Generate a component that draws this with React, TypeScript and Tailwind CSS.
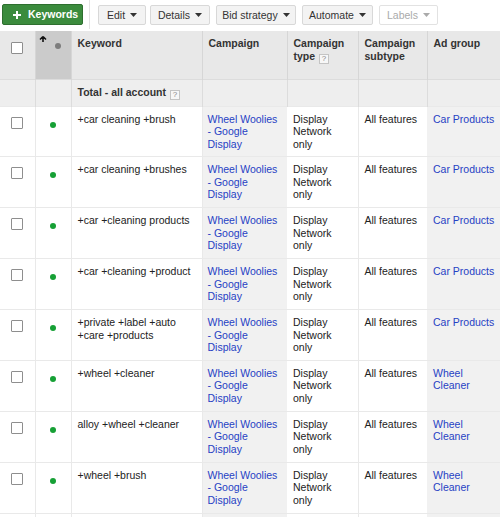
import React from "react";

const ROWS = [
  { kw: "+car cleaning +brush", ag: "Car Products" },
  { kw: "+car cleaning +brushes", ag: "Car Products" },
  { kw: "+car +cleaning products", ag: "Car Products" },
  { kw: "+car +cleaning +product", ag: "Car Products" },
  { kw: "+private +label +auto +care +products", ag: "Car Products" },
  { kw: "+wheel +cleaner", ag: "Wheel Cleaner" },
  { kw: "alloy +wheel +cleaner", ag: "Wheel Cleaner" },
  { kw: "+wheel +brush", ag: "Wheel Cleaner" },
];

function Caret() {
  return (
    <svg width="7" height="4" viewBox="0 0 7 4" className="ml-[5px]">
      <polygon points="0,0 7,0 3.5,4" fill="currentColor" />
    </svg>
  );
}

function Help() {
  return (
    <span className="ml-[4px] inline-block h-[10px] w-[10px] border border-[#c4c4c4] bg-[#f7f7f7] text-center align-[-1px] text-[8px] font-normal leading-[8px] text-[#888]">
      ?
    </span>
  );
}

function Checkbox() {
  return <span className="block h-[12px] w-[12px] rounded-[1px] border border-[#8e8e8e] bg-white" />;
}

function ToolButton({ label, w, ml, disabled }: { label: string; w: string; ml: string; disabled?: boolean }) {
  return (
    <button
      className={`mt-[5px] flex h-[20px] items-center justify-center rounded-[2px] border text-[10.5px] ${w} ${ml} ${
        disabled ? "border-[#e2e2e2] bg-white text-[#aaa]" : "border-[#d8d8d8] bg-[#f3f3f3] text-[#333]"
      }`}
    >
      {label}
      <Caret />
    </button>
  );
}

export default function App() {
  return (
    <div
      className="h-[517px] w-[500px] overflow-hidden bg-white text-[10.5px] leading-[12.5px] text-[#222]"
      style={{ fontFamily: '"Liberation Sans", Arial, sans-serif' }}
    >
      {/* Toolbar */}
      <div className="flex h-[31px] items-start">
        <button className="ml-[2px] mt-[4px] flex h-[21px] w-[81px] items-center rounded-[2px] border border-[#2e6f2f] bg-[#3b8b3d] pl-[10px] text-[10.5px] font-bold text-white">
          <svg width="8" height="8" viewBox="0 0 8 8" className="mr-[7px]">
            <path d="M3 0h2v3h3v2H5v3H3V5H0V3h3z" fill="white" />
          </svg>
          Keywords
        </button>
        <span className="ml-[6px] h-[29px] w-px bg-[#e3e3e3]" />
        <ToolButton label="Edit" w="w-[48px]" ml="ml-[8px]" />
        <ToolButton label="Details" w="w-[60px]" ml="ml-[4px]" />
        <ToolButton label="Bid strategy" w="w-[80px]" ml="ml-[6px]" />
        <ToolButton label="Automate" w="w-[71px]" ml="ml-[6px]" />
        <ToolButton label="Labels" w="w-[59px]" ml="ml-[6px]" disabled />
      </div>

      <table className="w-[500px] table-fixed border-collapse">
        <colgroup>
          <col className="w-[35px]" />
          <col className="w-[36px]" />
          <col className="w-[131px]" />
          <col className="w-[85px]" />
          <col className="w-[71px]" />
          <col className="w-[69px]" />
          <col className="w-[73px]" />
        </colgroup>
        <thead>
          <tr className="h-[48px] bg-[#e8e8e8] font-bold text-[#333]">
            <th className="border-r border-[#d6d6d6] p-0 align-top">
              <div className="flex justify-center pt-[11px]">
                <Checkbox />
              </div>
            </th>
            <th className="border-r border-[#d6d6d6] bg-[#cbcbcb] p-0 align-top">
              <svg width="36" height="22" viewBox="0 0 36 22" className="block">
                <path d="M7 5.5 L10 8.5 M7 5.5 L4 8.5 M7 5.5 V11" stroke="#111" strokeWidth="1.6" fill="none" />
                <circle cx="22" cy="15" r="3" fill="#7d7d7d" />
              </svg>
            </th>
            <th className="border-r border-[#d6d6d6] px-[6px] pt-[6px] text-left align-top">Keyword</th>
            <th className="border-r border-[#d6d6d6] px-[6px] pt-[6px] text-left align-top">Campaign</th>
            <th className="border-r border-[#d6d6d6] px-[6px] pt-[6px] text-left align-top">
              Campaign type
              <Help />
            </th>
            <th className="border-r border-[#d6d6d6] px-[6px] pt-[6px] text-left align-top">Campaign subtype</th>
            <th className="px-[6px] pt-[6px] text-left align-top">Ad group</th>
          </tr>
        </thead>
        <tbody>
          <tr className="h-[27px] border-t border-[#dcdcdc] bg-[#eeeeee] font-bold text-[#333]">
            <td className="border-r border-[#dcdcdc]" />
            <td className="border-r border-[#dcdcdc]" />
            <td className="border-r border-[#dcdcdc] px-[6px] align-middle">
              Total - all account
              <Help />
            </td>
            <td className="border-r border-[#dcdcdc]" />
            <td className="border-r border-[#dcdcdc]" />
            <td className="border-r border-[#dcdcdc]" />
            <td />
          </tr>
          {ROWS.map((r, i) => (
            <tr key={i} className="h-[50.9px] border-t border-[#e9e9e9] align-top">
              <td className="border-r border-[#e9e9e9] p-0">
                <div className="flex justify-center pt-[10px]">
                  <Checkbox />
                </div>
              </td>
              <td className="border-r border-[#e9e9e9] p-0">
                <div className="flex justify-center pt-[15px]">
                  <span className="block h-[6px] w-[6px] rounded-full bg-[#16a035]" />
                </div>
              </td>
              <td className="border-r border-[#e9e9e9] px-[6px] pt-[6px]">{r.kw}</td>
              <td className="bg-[#f1f1f1] px-[5px] pt-[6px] text-[#2641c4]">Wheel Woolies - Google Display</td>
              <td className="border-r border-[#e9e9e9] px-[6px] pt-[6px]">Display Network only</td>
              <td className="px-[6px] pt-[6px]">All features</td>
              <td className="bg-[#f1f1f1] pl-[6px] pr-[3px] pt-[6px] text-[#2641c4]">{r.ag}</td>
            </tr>
          ))}
          {/* next row, only its top edge is in view */}
          <tr className="h-[20px] border-t border-[#e9e9e9]">
            <td className="border-r border-[#e9e9e9]" />
            <td className="border-r border-[#e9e9e9]" />
            <td className="border-r border-[#e9e9e9]" />
            <td className="bg-[#f1f1f1]" />
            <td className="border-r border-[#e9e9e9]" />
            <td />
            <td className="bg-[#f1f1f1]" />
          </tr>
        </tbody>
      </table>
    </div>
  );
}
